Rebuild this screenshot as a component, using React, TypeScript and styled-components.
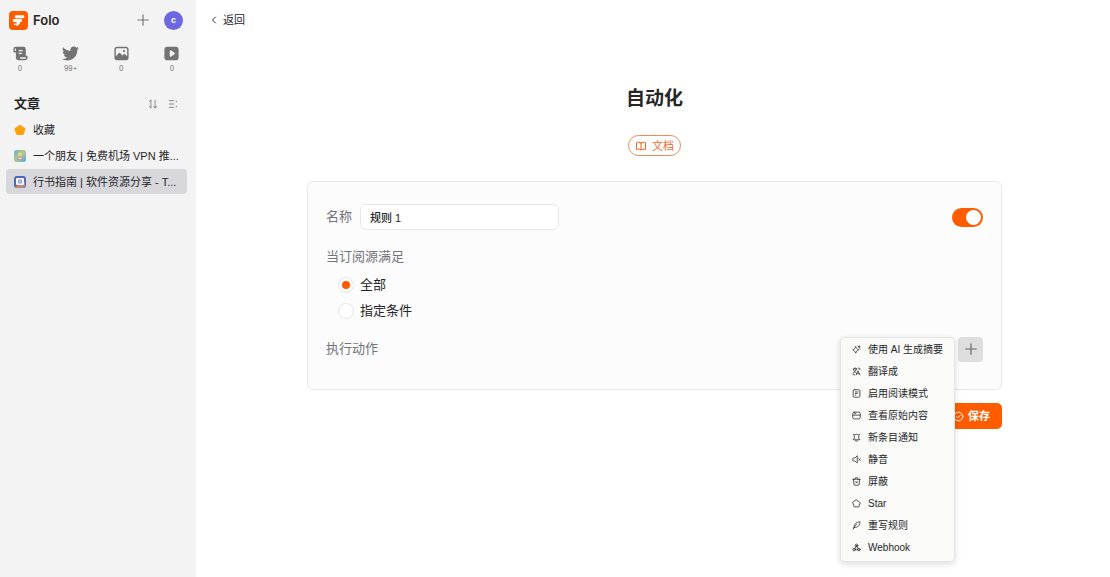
import React, { useState } from "react";
import styled, { createGlobalStyle, css } from "styled-components";
import { FaTwitter } from "react-icons/fa";

const accent = "#ff5c00";
const sans = `"Liberation Sans", "Noto Sans CJK SC", sans-serif`;

const GlobalStyle = createGlobalStyle`
  *, *::before, *::after { box-sizing: border-box; }
  body { margin: 0; background: #fff; color: #262629; font: 400 11px/16px ${sans}; }
  button, input { font: inherit; color: inherit; }
  button { margin: 0; padding: 0; border: 0; background: none; cursor: pointer; }
  h1, h2, ul, fieldset { margin: 0; padding: 0; border: 0; }
  ul { list-style: none; }
  a { color: inherit; text-decoration: none; }
  svg { display: block; flex: none; }
`;

const Shell = styled.div`
  display: flex;
  min-height: 100vh;
`;

/* Sidebar */

const Sidebar = styled.aside`
  flex: 0 0 196px;
  min-width: 0;
  padding: 0 10px 0 6px;
  background: #f3f3f3;
`;

const SidebarHeader = styled.header`
  display: flex;
  align-items: center;
  height: 40px;
  padding: 0 3px;
`;

const Brand = styled.a`
  display: flex;
  align-items: center;
  gap: 5px;
  margin-right: auto;
  font-family: Inter, sans-serif;
  font-size: 13px;
  font-weight: 600;
`;

const IconButton = styled.button`
  display: grid;
  place-items: center;
  color: #77777b;
`;

const Avatar = styled.button`
  width: 19px;
  height: 19px;
  margin-left: 14px;
  border-radius: 50%;
  background: #6d68e0;
  color: #fff;
  font-size: 9px;
  font-weight: 700;
  line-height: 18px;
`;

const ViewTabs = styled.nav`
  display: flex;
  justify-content: space-between;
  padding: 5px 5px 0;
`;

const ViewTab = styled.button`
  display: flex;
  flex-direction: column;
  align-items: center;
  gap: 2px;
  width: 18px;
  color: #737373;
  font-family: Inter, sans-serif;
  font-size: 7px;
  line-height: 10px;
`;

const CategoryHeader = styled.div`
  display: flex;
  align-items: center;
  gap: 10px;
  height: 20px;
  margin-top: 20px;
  padding: 0 8px;
`;

const CategoryTitle = styled.h2`
  margin-right: auto;
  font-size: 13px;
  font-weight: 700;
  line-height: 20px;
`;

const FeedList = styled.ul`
  display: grid;
  gap: 1px;
  margin-top: 3px;
`;

const FeedLink = styled.a<{ $active?: boolean }>`
  display: flex;
  align-items: center;
  gap: 7px;
  height: 25px;
  padding: 0 8px;
  border-radius: 4px;
  background: ${(p) => (p.$active ? "#d8d8dc" : "transparent")};
  white-space: nowrap;
`;

/* Main area */

const Main = styled.main`
  flex: 1;
  min-width: 0;
  padding: 0 9px 24px 12px;
`;

const TopBar = styled.div`
  display: flex;
  align-items: center;
  height: 40px;
`;

const BackButton = styled.button`
  display: flex;
  align-items: center;
  gap: 3px;
`;

const Page = styled.div`
  display: flex;
  flex-direction: column;
  align-items: center;
  max-width: 695px;
  margin: 0 auto;
  padding-top: 45px;
`;

const Title = styled.h1`
  font-size: 19px;
  font-weight: 700;
  line-height: 28px;
`;

const DocsLink = styled.a`
  display: flex;
  align-items: center;
  gap: 5px;
  height: 21px;
  margin-top: 22px;
  padding: 0 6px;
  border: 1px solid #f08a55;
  border-radius: 11px;
  color: #f06a2a;
`;

const Card = styled.section`
  width: 100%;
  margin-top: 25px;
  padding: 22px 18px 27px;
  border: 1px solid #e9e9eb;
  border-radius: 6px;
  background: #fcfcfc;
`;

const Row = styled.div`
  display: flex;
  align-items: center;
  height: 26px;
`;

const labelText = css`
  color: #73737b;
  font-size: 13px;
  line-height: 20px;
`;

const FieldLabel = styled.label`
  ${labelText}
`;

const TextInput = styled.input`
  width: 199px;
  height: 26px;
  margin-left: 8px;
  padding: 0 9px;
  border: 1px solid #e8e8ea;
  border-radius: 6px;
  background: #fff;
  font-weight: 500;
  outline: none;
`;

const Switch = styled.input`
  appearance: none;
  display: flex;
  align-items: center;
  width: 31px;
  height: 19px;
  margin: 0 0 0 auto;
  padding: 0 2px;
  border-radius: 10px;
  background: #d4d4d8;
  cursor: pointer;

  &::before {
    content: "";
    width: 15px;
    height: 15px;
    border-radius: 50%;
    background: #fff;
  }

  &:checked {
    justify-content: flex-end;
    background: ${accent};
  }
`;

const Conditions = styled.fieldset`
  min-width: 0;
  margin: 17px 0 12px;
`;

const Legend = styled.legend`
  ${labelText}
  padding: 0;
  margin-bottom: 5px;
`;

const RadioLabel = styled.label`
  display: flex;
  align-items: center;
  gap: 6px;
  height: 26px;
  padding-left: 12px;
  font-size: 13px;
`;

const Radio = styled.input`
  appearance: none;
  display: grid;
  place-items: center;
  width: 16px;
  height: 16px;
  margin: 0;
  border: 1px solid #e6e6e9;
  border-radius: 50%;
  background: #fff;

  &:checked::before {
    content: "";
    width: 8px;
    height: 8px;
    border-radius: 50%;
    background: ${accent};
  }
`;

const ActionLabel = styled.span`
  ${labelText}
`;

const MenuAnchor = styled.div`
  position: relative;
  margin-left: auto;
`;

const AddButton = styled.button`
  display: grid;
  place-items: center;
  width: 25px;
  height: 25px;
  border-radius: 4px;
  background: #dededf;
  color: #65656a;
`;

const Menu = styled.ul`
  position: absolute;
  z-index: 1;
  top: 0;
  right: 28px;
  width: 115px;
  padding: 1px 3px 2px;
  border: 1px solid #e5e5e5;
  border-radius: 4px;
  background: #fafaf9;
  box-shadow: 0 2px 6px rgba(0, 0, 0, 0.14);
`;

const MenuItem = styled.button`
  display: flex;
  align-items: center;
  gap: 7px;
  width: 100%;
  height: 22px;
  padding: 0 8px;
  border-radius: 3px;
  font-size: 10px;
  white-space: nowrap;
  text-align: left;

  &:hover {
    background: #ececec;
  }
`;

const SaveButton = styled.button`
  display: flex;
  align-items: center;
  align-self: flex-end;
  gap: 4px;
  height: 26px;
  margin-top: 13px;
  padding: 0 12px;
  border-radius: 5px;
  background: ${accent};
  color: #fff;
  font-weight: 700;
`;

/* Icons */

type IconProps = { size?: number; stroke?: number; children: React.ReactNode };

const Line = ({ size = 10, stroke = 2, children }: IconProps) => (
  <svg
    width={size}
    height={size}
    viewBox="0 0 24 24"
    fill="none"
    stroke="currentColor"
    strokeWidth={stroke}
    strokeLinecap="round"
    strokeLinejoin="round"
    aria-hidden="true"
  >
    {children}
  </svg>
);

const Solid = ({ size = 17, children }: IconProps) => (
  <svg width={size} height={size} viewBox="0 0 24 24" fill="currentColor" fillRule="evenodd" aria-hidden="true">
    {children}
  </svg>
);

const Logo = () => (
  <svg width="19" height="19" viewBox="0 0 24 24" aria-hidden="true">
    <rect width="24" height="24" rx="5" fill={accent} />
    <g fill="#fff">
      <rect x="7.400" y="5.400" width="12" height="3.700" rx="1.400" />
      <rect x="4.800" y="10.200" width="11.600" height="3.700" rx="1.400" />
      <path d="M10 13h4v1.600a1.600 1.600 0 0 1-.4 1.100l-2.200 2.700c-.8 1-2.200.5-2.200-.7V15Z" />
      <circle cx="7.400" cy="16.700" r="1.200" />
    </g>
  </svg>
);

const ArticleIcon = () => (
  <Solid>
    <path d="M5 2.500h11a3.500 3.500 0 0 1 3.500 3.500v9H21a1 1 0 0 1 1 1v2a3.500 3.500 0 0 1-3.500 3.500H9A3.500 3.500 0 0 1 5.500 18v-7.500H3.500A1.500 1.500 0 0 1 2 9V5.500a3 3 0 0 1 3-3ZM9.500 7v1.700H15V7Zm0 4v1.700H14V11Zm2 6.300c0 .8 0 1.400-.3 2h7.300a1.300 1.300 0 0 0 1.300-1.300v-.7ZM4 5.500v3h1.500v-3a.7.7 0 0 0-1.500 0Z" />
  </Solid>
);

const PictureIcon = () => (
  <Solid>
    <path d="M6 2.500h12a4 4 0 0 1 4 4v11a4 4 0 0 1-4 4H6a4 4 0 0 1-4-4v-11a4 4 0 0 1 4-4Zm0 2a2 2 0 0 0-2 2v9.300l3.600-3.900a2 2 0 0 1 3 0l2.700 3 1.400-1.400a2 2 0 0 1 2.800 0L20 16V6.500a2 2 0 0 0-2-2Zm9.500 2.500a1.600 1.600 0 1 1 0 3.200 1.600 1.600 0 0 1 0-3.200Z" />
  </Solid>
);

const VideoIcon = () => (
  <Solid>
    <path d="M6 2.500h12a4 4 0 0 1 4 4v11a4 4 0 0 1-4 4H6a4 4 0 0 1-4-4v-11a4 4 0 0 1 4-4Zm3.500 6v7c0 .9.900 1.400 1.700 1l5-3.500a1.200 1.200 0 0 0 0-2l-5-3.500c-.8-.4-1.700.1-1.700 1Z" />
  </Solid>
);

const PentagonIcon = () => (
  <svg width="12" height="12" viewBox="0 0 24 24" fill="#ff9f0a" stroke="#ff9f0a" strokeWidth="4" strokeLinejoin="round" aria-hidden="true">
    <path d="M12 3.500 21 10l-3.500 10h-11L3 10Z" />
  </svg>
);

const FriendIcon = () => (
  <svg width="12" height="12" viewBox="0 0 24 24" aria-hidden="true">
    <defs>
      <linearGradient id="friend" x1="0" y1="0" x2="1" y2="1">
        <stop offset="0" stopColor="#5fb5d8" />
        <stop offset=".5" stopColor="#b5c68a" />
        <stop offset="1" stopColor="#55a8e0" />
      </linearGradient>
    </defs>
    <rect width="24" height="24" rx="5" fill="url(#friend)" />
    <circle cx="12" cy="8.500" r="4" fill="#f0d36a" />
    <path d="M6 19c0-8 12-8 12 0Z" fill="#a98bd0" />
    <path d="M9 15h6v3H9Z" fill="#f4e3a0" />
  </svg>
);

const GuideIcon = () => (
  <svg width="12" height="12" viewBox="0 0 24 24" aria-hidden="true">
    <rect width="24" height="24" rx="6" fill="#4a68b4" />
    <path d="M2 21 22 12v7a5 5 0 0 1-5 5H7a5 5 0 0 1-5-3Z" fill="#b98a78" />
    <rect x="4" y="4" width="16" height="14" rx="2" fill="#f4f4f8" />
    <rect x="8" y="7" width="8" height="8" rx="2" fill="#8a9bd0" />
    <path d="M12 9v4" stroke="#fff" strokeWidth="2" />
  </svg>
);

const PlusIcon = ({ size = 14 }: { size?: number }) => (
  <Line size={size} stroke={2}>
    <path d="M12 3v18M3 12h18" />
  </Line>
);

const menuItems: { label: string; icon: React.ReactNode }[] = [
  {
    label: "使用 AI 生成摘要",
    icon: <path d="M10 5c1.500 4 3.500 6 8 8-4.500 2-6.500 4-8 8.500C8.500 17 6.500 15 2 13c4.500-2 6.500-4 8-8ZM19 2v5M16.500 4.500h5M21 10v1" />,
  },
  {
    label: "翻译成",
    icon: <path d="M3 5h10M8 2v3M4 15c4-2 7-5 8-10M4 7c1 4 4 6 7 8M11 21l5-11 5 11M13 18h6M17 3h2a2 2 0 0 1 2 2v2M3 18v1a2 2 0 0 0 2 2h2" />,
  },
  {
    label: "启用阅读模式",
    icon: <path d="M6 2h12a3 3 0 0 1 3 3v14a3 3 0 0 1-3 3H6a3 3 0 0 1-3-3V5a3 3 0 0 1 3-3ZM9 8h7M9 12h5M9 16h1" />,
  },
  {
    label: "查看原始内容",
    icon: <path d="M6 3h12a4 4 0 0 1 4 4v10a4 4 0 0 1-4 4H6a4 4 0 0 1-4-4V7a4 4 0 0 1 4-4ZM2 11h20M7 7h3" />,
  },
  {
    label: "新条目通知",
    icon: <path d="M6 5c3-2 9-2 12 0v9l3 4H3l3-4ZM9 21c2 1 4 1 6 0M3 3l1 1M21 3l-1 1" />,
  },
  {
    label: "静音",
    icon: <path d="M14 3v18l-7-5H4a2 2 0 0 1-2-2v-4a2 2 0 0 1 2-2h3ZM18 10l4 4M22 10l-4 4" />,
  },
  {
    label: "屏蔽",
    icon: <path d="M2 6h20M8 6l1-4h6l1 4M4 6l1 13a3 3 0 0 0 3 3h8a3 3 0 0 0 3-3l1-13M10 12l4 4M14 12l-4 4" />,
  },
  { label: "Star", icon: <path d="M12 2.500 22 10l-4 11H6L2 10Z" /> },
  {
    label: "重写规则",
    icon: <path d="M3 22c2-6 5-10 9-13M6 17C5 9 11 3 21 2c0 7-2 11-6 13-3 2-6 2-9 2Z" />,
  },
  {
    label: "Webhook",
    icon: (
      <>
        <circle cx="12" cy="6.500" r="3.500" />
        <circle cx="5.500" cy="17.500" r="3.500" />
        <circle cx="18.500" cy="17.500" r="3.500" />
        <path d="m12 7-5 9M12 7l5 9M9 18h6" />
      </>
    ),
  },
];

export default function App() {
  const [name, setName] = useState("规则 1");
  const [enabled, setEnabled] = useState(true);
  const [scope, setScope] = useState("all");
  const [menuOpen, setMenuOpen] = useState(true);

  return (
    <>
      <GlobalStyle />
      <Shell>
        <Sidebar>
          <SidebarHeader>
            <Brand href="#">
              <Logo />
              Folo
            </Brand>
            <IconButton aria-label="添加">
              <PlusIcon />
            </IconButton>
            <Avatar>c</Avatar>
          </SidebarHeader>
          <ViewTabs>
            <ViewTab>
              <ArticleIcon />0
            </ViewTab>
            <ViewTab>
              <FaTwitter size={17} />
              99+
            </ViewTab>
            <ViewTab>
              <PictureIcon />0
            </ViewTab>
            <ViewTab>
              <VideoIcon />0
            </ViewTab>
          </ViewTabs>
          <CategoryHeader>
            <CategoryTitle>文章</CategoryTitle>
            <IconButton aria-label="排序">
              <Line size={10}>
                <path d="M7 3v18M3 6l4-3M17 3v18M17 21l4-3M3 18l4 3M13 18l4 3" />
              </Line>
            </IconButton>
            <IconButton aria-label="分组">
              <Line size={10}>
                <path d="M3 4h11M3 12h11M3 20h11M20 5v2M20 17v2" />
              </Line>
            </IconButton>
          </CategoryHeader>
          <FeedList>
            <li>
              <FeedLink href="#">
                <PentagonIcon />
                收藏
              </FeedLink>
            </li>
            <li>
              <FeedLink href="#">
                <FriendIcon />
                一个朋友 | 免费机场 VPN 推...
              </FeedLink>
            </li>
            <li>
              <FeedLink href="#" $active>
                <GuideIcon />
                行书指南 | 软件资源分享 - T...
              </FeedLink>
            </li>
          </FeedList>
        </Sidebar>

        <Main>
          <TopBar>
            <BackButton>
              <Line size={12} stroke={2}>
                <path d="m15 6-6 6 6 6" />
              </Line>
              返回
            </BackButton>
          </TopBar>
          <Page>
            <Title>自动化</Title>
            <DocsLink href="#">
              <Line size={12}>
                <path d="M12 6v14M12 6c-2-2-6-2-9-1v14c3-1 7-1 9 1 2-2 6-2 9-1V5c-3-1-7-1-9 1Z" />
              </Line>
              文档
            </DocsLink>
            <Card>
              <Row>
                <FieldLabel htmlFor="rule-name">名称</FieldLabel>
                <TextInput id="rule-name" value={name} onChange={(e) => setName(e.target.value)} />
                <Switch
                  type="checkbox"
                  role="switch"
                  aria-label="启用规则"
                  checked={enabled}
                  onChange={(e) => setEnabled(e.target.checked)}
                />
              </Row>
              <Conditions>
                <Legend>当订阅源满足</Legend>
                <RadioLabel>
                  <Radio type="radio" name="scope" checked={scope === "all"} onChange={() => setScope("all")} />
                  全部
                </RadioLabel>
                <RadioLabel>
                  <Radio type="radio" name="scope" checked={scope === "custom"} onChange={() => setScope("custom")} />
                  指定条件
                </RadioLabel>
              </Conditions>
              <Row>
                <ActionLabel>执行动作</ActionLabel>
                <MenuAnchor>
                  <AddButton
                    aria-label="添加动作"
                    aria-haspopup="menu"
                    aria-expanded={menuOpen}
                    onClick={() => setMenuOpen(!menuOpen)}
                  >
                    <PlusIcon />
                  </AddButton>
                  {menuOpen && (
                    <Menu role="menu">
                      {menuItems.map((item) => (
                        <li key={item.label} role="none">
                          <MenuItem role="menuitem">
                            <Line size={9}>{item.icon}</Line>
                            {item.label}
                          </MenuItem>
                        </li>
                      ))}
                    </Menu>
                  )}
                </MenuAnchor>
              </Row>
            </Card>
            <SaveButton>
              <Line size={11}>
                <circle cx="12" cy="12" r="9.500" />
                <path d="m7.500 12 3 3 6-6" />
              </Line>
              保存
            </SaveButton>
          </Page>
        </Main>
      </Shell>
    </>
  );
}
